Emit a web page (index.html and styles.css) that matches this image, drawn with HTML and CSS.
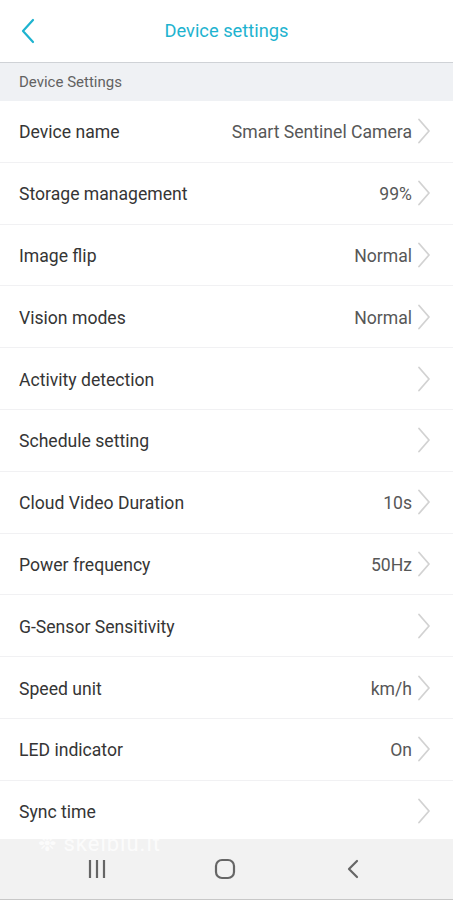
FILE: index.html
```html
<!DOCTYPE html>
<html>
<head>
<meta charset="utf-8">
<link rel="stylesheet" href="styles.css">
</head>
<body>
<div class="app">
  <header class="topbar">
    <span class="back">
      <svg width="16" height="26" viewBox="0 0 16 26"><path d="M13 2 L3 13 L13 24" fill="none" stroke="#1eb3cf" stroke-width="2.2" stroke-linecap="round" stroke-linejoin="round"/></svg>
    </span>
    <h1 class="title">Device settings</h1>
  </header>
  <div class="section">Device Settings</div>
  <ul class="list">
    <li class="row"><span class="label">Device name</span><span class="value">Smart Sentinel Camera</span><svg class="chev" viewBox="0 0 14 26"><path d="M2 1.5 L12 13 L2 24.5" fill="none" stroke="#d2d2d2" stroke-width="1.8" stroke-linecap="round" stroke-linejoin="round"/></svg></li>
    <li class="row"><span class="label">Storage management</span><span class="value">99%</span><svg class="chev" viewBox="0 0 14 26"><path d="M2 1.5 L12 13 L2 24.5" fill="none" stroke="#d2d2d2" stroke-width="1.8" stroke-linecap="round" stroke-linejoin="round"/></svg></li>
    <li class="row"><span class="label">Image flip</span><span class="value">Normal</span><svg class="chev" viewBox="0 0 14 26"><path d="M2 1.5 L12 13 L2 24.5" fill="none" stroke="#d2d2d2" stroke-width="1.8" stroke-linecap="round" stroke-linejoin="round"/></svg></li>
    <li class="row"><span class="label">Vision modes</span><span class="value">Normal</span><svg class="chev" viewBox="0 0 14 26"><path d="M2 1.5 L12 13 L2 24.5" fill="none" stroke="#d2d2d2" stroke-width="1.8" stroke-linecap="round" stroke-linejoin="round"/></svg></li>
    <li class="row"><span class="label">Activity detection</span><span class="value"></span><svg class="chev" viewBox="0 0 14 26"><path d="M2 1.5 L12 13 L2 24.5" fill="none" stroke="#d2d2d2" stroke-width="1.8" stroke-linecap="round" stroke-linejoin="round"/></svg></li>
    <li class="row"><span class="label">Schedule setting</span><span class="value"></span><svg class="chev" viewBox="0 0 14 26"><path d="M2 1.5 L12 13 L2 24.5" fill="none" stroke="#d2d2d2" stroke-width="1.8" stroke-linecap="round" stroke-linejoin="round"/></svg></li>
    <li class="row"><span class="label">Cloud Video Duration</span><span class="value">10s</span><svg class="chev" viewBox="0 0 14 26"><path d="M2 1.5 L12 13 L2 24.5" fill="none" stroke="#d2d2d2" stroke-width="1.8" stroke-linecap="round" stroke-linejoin="round"/></svg></li>
    <li class="row"><span class="label">Power frequency</span><span class="value">50Hz</span><svg class="chev" viewBox="0 0 14 26"><path d="M2 1.5 L12 13 L2 24.5" fill="none" stroke="#d2d2d2" stroke-width="1.8" stroke-linecap="round" stroke-linejoin="round"/></svg></li>
    <li class="row"><span class="label">G-Sensor Sensitivity</span><span class="value"></span><svg class="chev" viewBox="0 0 14 26"><path d="M2 1.5 L12 13 L2 24.5" fill="none" stroke="#d2d2d2" stroke-width="1.8" stroke-linecap="round" stroke-linejoin="round"/></svg></li>
    <li class="row"><span class="label">Speed unit</span><span class="value">km/h</span><svg class="chev" viewBox="0 0 14 26"><path d="M2 1.5 L12 13 L2 24.5" fill="none" stroke="#d2d2d2" stroke-width="1.8" stroke-linecap="round" stroke-linejoin="round"/></svg></li>
    <li class="row"><span class="label">LED indicator</span><span class="value">On</span><svg class="chev" viewBox="0 0 14 26"><path d="M2 1.5 L12 13 L2 24.5" fill="none" stroke="#d2d2d2" stroke-width="1.8" stroke-linecap="round" stroke-linejoin="round"/></svg></li>
    <li class="row"><span class="label">Sync time</span><span class="value"></span><svg class="chev" viewBox="0 0 14 26"><path d="M2 1.5 L12 13 L2 24.5" fill="none" stroke="#d2d2d2" stroke-width="1.8" stroke-linecap="round" stroke-linejoin="round"/></svg></li>
  </ul>
  <nav class="sysnav">
    <span class="wm">❉ skelbiu.lt</span>
    <span class="navbtn">
      <svg width="22" height="20" viewBox="0 0 22 20"><path d="M4 1v18M11 1v18M18 1v18" stroke="#666" stroke-width="2.2"/></svg>
    </span>
    <span class="navbtn">
      <svg width="22" height="22" viewBox="0 0 22 22"><rect x="2" y="2" width="18" height="18" rx="6" fill="none" stroke="#666" stroke-width="2.2"/></svg>
    </span>
    <span class="navbtn">
      <svg width="14" height="22" viewBox="0 0 14 22"><path d="M11 3 L3 11 L11 19" fill="none" stroke="#666" stroke-width="2.2" stroke-linecap="round" stroke-linejoin="round"/></svg>
    </span>
  </nav>
</div>
</body>
</html>
```

FILE: styles.css
```css
* { box-sizing: border-box; }
html, body { margin: 0; padding: 0; }
body {
  font-family: Roboto, "Noto Sans", sans-serif;
  background: #fff;
  width: 453px;
  height: 900px;
  overflow: hidden;
}
.app {
  position: relative;
  height: 900px;
  display: flex;
  flex-direction: column;
  overflow: hidden;
}
.topbar {
  height: 63px;
  flex: none;
  display: flex;
  align-items: center;
  justify-content: center;
  position: relative;
  border-bottom: 1.5px solid #cfd2d6;
}
.back {
  position: absolute;
  left: 20px;
  top: 18px;
  display: flex;
}
.title {
  margin: 0 0 2px 0;
  font-size: 18.3px;
  font-weight: 400;
  color: #1eb3cf;
}
.section {
  height: 38px;
  flex: none;
  background: #eff1f4;
  color: #626262;
  font-size: 15px;
  padding-left: 19px;
  display: flex;
  align-items: center;
}
.list {
  list-style: none;
  margin: 0;
  padding: 0;
  flex: none;
}
.row {
  height: 61.8px;
  display: flex;
  align-items: center;
  padding: 0 22px 0 19px;
  border-bottom: 1px solid #f1f1f3;
}
.label {
  font-size: 17.6px;
  color: #353535;
  flex: 1;
  padding-top: 2px;
}
.value {
  font-size: 17.6px;
  color: #575757;
  margin-right: 5px;
  padding-top: 2px;
}
.chev {
  width: 14px;
  height: 26px;
  flex: none;
}
.sysnav {
  position: absolute;
  left: 0;
  right: 0;
  top: 839px;
  height: 61px;
  background: #f2f2f2;
  border-bottom: 1px solid #c8c8c8;
  display: grid;
  grid-template-columns: 128px 128px 128px;
  align-items: center;
  padding-left: 33px;
}
.navbtn {
  display: flex;
  align-items: center;
  justify-content: center;
}
.wm {
  position: absolute;
  left: 38px;
  top: -8px;
  font-size: 22px;
  color: rgba(255,255,255,0.75);
  letter-spacing: 1px;
}
```
